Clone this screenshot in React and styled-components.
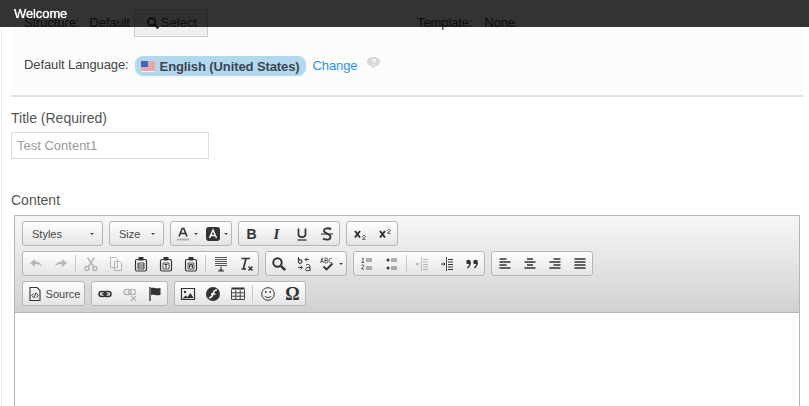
import React from 'react';
import styled, { createGlobalStyle } from 'styled-components';

const GlobalStyle = createGlobalStyle`
    html, body {
        margin: 0;
        padding: 0;
        background: #fff;
        font-family: "Liberation Sans", Arial, sans-serif;
        color: #444;
    }
`;

const Page = styled.div`
    height: 406px;
    overflow: hidden;
    margin-left: 1px;
    border-left: 1px solid #eee;
    padding-left: 9px;
    box-sizing: border-box;
`;

const TopBar = styled.div`
    position: fixed;
    top: 0;
    left: 0;
    right: 0;
    height: 27px;
    padding-left: 14px;
    background: rgba(0, 0, 0, 0.8);
    color: #fff;
    font-size: 13px;
    letter-spacing: -0.1px;
    line-height: 27px;
    text-shadow: 0 0 1px #fff;
`;

const InfoPanel = styled.div`
    width: 792px;
    height: 97px;
    box-sizing: border-box;
    background: #fcfcfc;
    border-bottom: 2px solid #e0e0e0;
    padding: 9px 0 0 13px;
    font-size: 13px;
    letter-spacing: -0.1px;
`;

const InfoRow = styled.div`
    display: flex;
    align-items: center;
    height: 27px;
    margin-bottom: 15px;
`;

const InfoCell = styled.div`
    display: flex;
    align-items: center;
    width: ${p => p.$width || 'auto'};
`;

const InfoLabel = styled.span`
    margin-right: ${p => p.$gap || 12}px;
`;

const SelectButton = styled.button`
    display: flex;
    align-items: center;
    gap: 1px;
    width: 74px;
    height: 28px;
    margin-left: 4px;
    padding: 0 0 0 11px;
    border: 1px solid #ccc;
    background: #efefef;
    color: #444;
    font: 13px "Liberation Sans", Arial, sans-serif;
`;

const LanguagePill = styled.span`
    display: flex;
    align-items: center;
    gap: 5px;
    height: 20px;
    padding: 0 6px;
    margin: 3px 0 0 -6px;
    border-radius: 8px;
    background: #b2d8f0;
    color: #3c4650;
    font-size: 13px;
    font-weight: bold;
    letter-spacing: -0.1px;
`;

const ChangeLink = styled.a`
    margin: 2px 8px 0 7px;
    color: #2a93e0;
    font-size: 13px;
`;

const FieldLabel = styled.div`
    font-size: 14px;
    line-height: 16px;
    color: #555;
    margin-bottom: ${p => p.$after}px;
    margin-top: ${p => p.$before}px;
`;

const TitleInput = styled.input`
    display: block;
    width: 198px;
    height: 27px;
    box-sizing: border-box;
    border: 1px solid #ddd;
    padding: 0 5px;
    font: 13px "Liberation Sans", Arial, sans-serif;
    color: #999;
    background: #fff;
`;

const Editor = styled.div`
    width: 786px;
    height: 200px;
    margin-left: 3px;
    box-sizing: border-box;
    border: 1px solid #b6b6b6;
    border-bottom: 0;
`;

const Toolbar = styled.div`
    height: 97px;
    box-sizing: border-box;
    padding: 5px 7px 0;
    background: linear-gradient(#f6f6f6, #d0d2d0);
    border-bottom: 1px solid #b6b6b6;
`;

const ToolRow = styled.div`
    display: flex;
    gap: 6px;
    height: 25px;
    margin-bottom: 5px;
`;

const Group = styled.div`
    display: flex;
    align-items: center;
    height: 25px;
    box-sizing: border-box;
    border: 1px solid #b6b6b6;
    border-radius: 3px;
    background: linear-gradient(#fff, #e4e4e4);
`;

const ToolButton = styled.span`
    display: flex;
    align-items: center;
    justify-content: center;
    gap: 3px;
    width: ${p => p.$width || 25}px;
    height: 23px;
    color: #333;
    svg {
        display: block;
        opacity: ${p => (p.$off ? 0.3 : 1)};
    }
`;

const Separator = styled.span`
    width: 1px;
    height: 17px;
    margin: 0 2px;
    background: #c8c8c8;
`;

const Combo = styled.span`
    display: flex;
    align-items: center;
    justify-content: space-between;
    width: ${p => p.$width}px;
    box-sizing: border-box;
    padding: 0 8px 0 ${p => p.$left}px;
    font-size: 11px;
    color: #484848;
`;

const Caret = styled.span`
    width: 0;
    height: 0;
    border-left: 2px solid transparent;
    border-right: 2px solid transparent;
    border-top: 2px solid #444;
`;

const SourceLabel = styled.span`
    font-size: 11px;
    color: #484848;
`;

const Glyph = styled.span`
    font: ${p => p.$font};
    color: #333;
    line-height: 16px;
`;

const Icon = ({ children, size = 16 }) => (
    <svg width={size} height={size} viewBox="0 0 16 16" fill="none" stroke="#333" strokeWidth="1">
        {children}
    </svg>
);

const Clipboard = ({ children }) => (
    <>
        <rect x="2.500" y="3.500" width="11" height="11.500" rx="1.500" strokeWidth="1.200" />
        <path d="M5.500 1h5v3.500h-5z" fill="#333" stroke="none" />
        {children}
    </>
);

const icons = {
    undo: <path d="M2 7l5-4v2.600c4 0 6 2 7 5-2-2-4-2.400-7-2.200V11z" fill="#333" stroke="none" />,
    redo: <path d="M14 7L9 3v2.600c-4 0-6 2-7 5 2-2 4-2.400 7-2.200V11z" fill="#333" stroke="none" />,
    cut: (
        <>
            <path d="M4.500 1.500l6 9M11.500 1.500l-6 9" strokeWidth="1.500" />
            <circle cx="4" cy="12.500" r="2" strokeWidth="1.400" />
            <circle cx="12" cy="12.500" r="2" strokeWidth="1.400" />
        </>
    ),
    copy: <path d="M2.500 1.500h5l2 2v8h-7zM6.500 5.500h5l2 2v7h-7z" fill="#fff" />,
    paste: <Clipboard><path d="M5 7h6v6H5zM5 9h6M5 11h6" strokeWidth="0.900" /></Clipboard>,
    pasteText: <Clipboard><path d="M5 7h6v6H5z" strokeWidth="0.800" /><path d="M6.500 8.500h3M8 8.500V12" strokeWidth="1" /></Clipboard>,
    pasteWord: <Clipboard><path d="M5 7h6v6H5z" strokeWidth="0.800" /><path d="M6.500 12V8.500h3V12M6.500 10h3" strokeWidth="0.900" /></Clipboard>,
    block: (
        <>
            <path d="M2 1.500h12M2 3.500h12M2 5.500h12M2 7.500h12M2 9.500h12" strokeWidth="1" stroke="#555" />
            <path d="M8 10.500v3.500M6.500 13L8 15l1.500-2M5 15h6" strokeWidth="1" />
        </>
    ),
    clear: (
        <>
            <path d="M3.500 2.500h8.500M8 2.500L5.500 12.500M3.500 13h4.500" strokeWidth="1.700" />
            <path d="M10.500 10.500l4 4M14.500 10.500l-4 4" strokeWidth="1.500" />
        </>
    ),
    search: (
        <>
            <circle cx="6.500" cy="6.500" r="4.200" strokeWidth="2" />
            <path d="M9.800 9.800l4.400 4.400" strokeWidth="2.600" />
        </>
    ),
    replace: (
        <>
            <path d="M2.500 1v6M2.500 4.500c1-1.500 3.500-1 3.500 1s-2.500 2.500-3.500 1" strokeWidth="1.100" />
            <path d="M9 3.500h4M11 1.500l-2 2 2 2M2 11.500h4M4.500 9.500l2 2-2 2" strokeWidth="0.900" />
            <path d="M10 9c2-1 4-.5 4 1.500V15M14 11.500c-3-.5-4.500 .5-4.500 2s3 1.800 4.500 0" strokeWidth="1" />
        </>
    ),
    spell: (
        <>
            <path d="M.5 7l1.500-5 1.500 5M1 5.500h2M5 2v5M5 2h1.300a1.200 1.200 0 010 2.500H5h1.500a1.200 1.200 0 010 2.500H5M12 2.500H10.500a1.500 1.500 0 00-1.500 1.500v1.200a1.500 1.500 0 001.500 1.500H12" strokeWidth="0.700" />
            <path d="M3.500 10.500l3 3 6-6" strokeWidth="1.800" />
        </>
    ),
    numbered: (
        <>
            <path d="M3 2.500l1-.5v4.500M2.500 6.500h2.500M2.500 9.500c.7-1 2.500-.8 2.400.3-.1 1-2.400 2-2.400 3.200h2.600" strokeWidth="0.800" />
            <path d="M7 3h6M7 5h6M7 11h6M7 13h6" strokeWidth="1.100" stroke="#666" />
        </>
    ),
    bullets: (
        <>
            <circle cx="4" cy="4" r="1.500" fill="#333" stroke="none" />
            <circle cx="4" cy="12" r="1.500" fill="#333" stroke="none" />
            <path d="M7 3h6M7 5h6M7 11h6M7 13h6" strokeWidth="1.100" stroke="#666" />
        </>
    ),
    outdent: (
        <>
            <path d="M7.500 1v14" strokeWidth="0.900" />
            <path d="M9 3.500h5M9 6h5M9 8.500h5M9 11h5M9 13.500h5" strokeWidth="1" />
            <path d="M2 8h4M4 6.500L2 8l2 1.500" strokeWidth="1" />
        </>
    ),
    indent: (
        <>
            <path d="M7.500 1v14" strokeWidth="0.900" />
            <path d="M9 3.500h5M9 6h5M9 8.500h5M9 11h5M9 13.500h5" strokeWidth="1" />
            <path d="M2 8h4M4.500 6.500L6 8l-1.500 1.500" strokeWidth="1" />
        </>
    ),
    quote: (
        <>
            <circle cx="4.500" cy="6" r="2.300" fill="#333" stroke="none" />
            <circle cx="11.500" cy="6" r="2.300" fill="#333" stroke="none" />
            <path d="M6.300 6.500c0 2.500-1 4-3 5.500M13.300 6.500c0 2.500-1 4-3 5.500" strokeWidth="1.300" />
        </>
    ),
    alignLeft: <path d="M2.500 3h7M2.500 6h11M2.500 9h7M2.500 12h11" strokeWidth="1.600" />,
    alignCenter: <path d="M5 3h6M2.500 6h11M5 9h6M2.500 12h11" strokeWidth="1.600" />,
    alignRight: <path d="M6.500 3h7M2.500 6h11M6.500 9h7M2.500 12h11" strokeWidth="1.600" />,
    justify: <path d="M2.500 3h11M2.500 6h11M2.500 9h11M2.500 12h11" strokeWidth="1.600" />,
    source: (
        <>
            <path d="M3 1.500h7l3 3v10H3z" strokeWidth="1.100" />
            <path d="M6.500 7.500L4.800 9.500l1.700 2M9.500 7.500l1.700 2-1.700 2M7 12l2-5.500" strokeWidth="1" />
        </>
    ),
    link: (
        <>
            <rect x="2" y="5.500" width="7" height="5" rx="2.500" strokeWidth="1.500" />
            <rect x="7" y="5.500" width="7" height="5" rx="2.500" strokeWidth="1.500" />
            <path d="M4.500 8h7" strokeWidth="1.300" />
        </>
    ),
    unlink: (
        <>
            <rect x="2" y="3.500" width="7" height="5" rx="2.500" strokeWidth="1.400" />
            <rect x="6.500" y="3.500" width="7" height="5" rx="2.500" strokeWidth="1.400" />
            <path d="M9 10l5 5M14 10l-5 5" strokeWidth="1.400" />
        </>
    ),
    anchor: (
        <>
            <path d="M3 1v14" strokeWidth="1.400" />
            <path d="M4 2c3-1 4 1 9.500 0v7C8 10 7 8 4 9z" fill="#333" stroke="none" />
        </>
    ),
    image: (
        <>
            <path d="M1.500 2.500h13v11h-13z" strokeWidth="1.200" />
            <circle cx="5" cy="6" r="1.200" fill="#333" stroke="none" />
            <path d="M2.500 12.500l3-3 2 1.500 3-4 3 5z" fill="#333" stroke="none" />
        </>
    ),
    flash: (
        <>
            <circle cx="8" cy="8" r="7" fill="#333" stroke="none" />
            <path d="M12 4c-3 0-3.500 1.500-4 4s-1 3.500-4 4M6 8h4.500" stroke="#fff" strokeWidth="1.400" />
        </>
    ),
    table: (
        <>
            <path d="M1.500 2.500h13" strokeWidth="2" />
            <path d="M1.500 3.500v10h13v-10M1.500 6.800h13M1.500 10.200h13M5.800 4v9.500M10.200 4v9.500" strokeWidth="0.900" />
        </>
    ),
    smiley: (
        <>
            <circle cx="8" cy="8" r="6.300" strokeWidth="1" />
            <circle cx="5.800" cy="6" r="0.900" fill="#333" stroke="none" />
            <circle cx="10.200" cy="6" r="0.900" fill="#333" stroke="none" />
            <path d="M4.800 10c1.400 2 5 2 6.400 0" strokeWidth="1" />
        </>
    ),
};

const FontColorIcon = () => (
    <Icon>
        <path d="M4 10.500L7.200 2.500h1.600L12 10.500M5.500 7.500h5" strokeWidth="1.600" />
        <path d="M2 13.500h12" stroke="#b0b0b0" strokeWidth="2" />
    </Icon>
);

const BackColorIcon = () => (
    <Icon>
        <rect x="1.500" y="1.500" width="13" height="13" rx="2" fill="#333" />
        <path d="M4.500 12L8 4l3.500 8M5.800 9.500h4.400" stroke="#fff" strokeWidth="1.400" />
    </Icon>
);

const SearchIcon = () => (
    <svg width="14" height="14" viewBox="0 0 16 16" fill="none" stroke="#333">
        {icons.search}
    </svg>
);

const FlagIcon = () => (
    <svg width="14" height="11" viewBox="0 0 14 11">
        <rect width="14" height="11" fill="#f0f0f0" />
        <path d="M0 1h14M0 3h14M0 5h14M0 7h14M0 9h14" stroke="#d8606a" strokeWidth="1" />
        <rect width="7" height="6" fill="#4a62b8" />
    </svg>
);

const HelpBubble = styled(({ className }) => (
    <svg className={className} width="15" height="12" viewBox="0 0 15 13">
        <path d="M7.500 0C3 0 .5 2 .5 5s2.500 4.500 5 5l2 3 1.500-3c3-.4 5.500-2 5.500-5s-3-5-7-5z" fill="#d6d6d6" />
        <path d="M5.800 3.500c.5-1.300 3.500-1.300 3.500.4 0 1.200-1.800 1.200-1.800 2.600M7.500 7.500v1.500" stroke="#fff" strokeWidth="1.300" fill="none" />
    </svg>
))`
    margin-top: -4px;
`;

const row1Text = [
    { key: 'bold', font: 'bold 14px "Liberation Sans", Arial, sans-serif', text: 'B' },
    { key: 'italic', font: 'italic bold 15px "Liberation Serif", serif', text: 'I' },
];

const IconButton = ({ name, off }) => (
    <ToolButton $off={off}>
        <Icon>{icons[name]}</Icon>
    </ToolButton>
);

const Script = ({ up }) => (
    <ToolButton>
        <Icon>
            <path d="M3 5l5 6.500M8 5l-5 6.500" strokeWidth="2" />
            <path d={up ? 'M10.500 5c0-2 3-2 3-.4 0 .9-3 1.700-3 2.700h3' : 'M10.500 11c0-2 3-2 3-.4 0 .9-3 1.700-3 2.700h3'} strokeWidth="0.800" />
        </Icon>
    </ToolButton>
);

const App = () => (
    <>
        <GlobalStyle />
        <TopBar>Welcome</TopBar>
        <Page>
            <InfoPanel>
                <InfoRow>
                    <InfoCell $width="393px">
                        <InfoLabel $gap={10}>Structure:</InfoLabel>
                        <span>Default</span>
                        <SelectButton>
                            <SearchIcon />
                            Select
                        </SelectButton>
                    </InfoCell>
                    <InfoCell>
                        <InfoLabel>Template:</InfoLabel>
                        <span>None</span>
                    </InfoCell>
                </InfoRow>
                <InfoRow>
                    <InfoLabel>Default Language:</InfoLabel>
                    <LanguagePill>
                        <FlagIcon />
                        English (United States)
                    </LanguagePill>
                    <ChangeLink>Change</ChangeLink>
                    <HelpBubble />
                </InfoRow>
            </InfoPanel>
            <FieldLabel $before={13} $after={6}>Title (Required)</FieldLabel>
            <TitleInput readOnly value="Test Content1" />
            <FieldLabel $before={33} $after={7}>Content</FieldLabel>
            <Editor>
                <Toolbar>
                    <ToolRow>
                        <Group>
                            <Combo $width={79} $left={9}>Styles<Caret /></Combo>
                        </Group>
                        <Group>
                            <Combo $width={53} $left={9}>Size<Caret /></Combo>
                        </Group>
                        <Group>
                            <ToolButton $width={30}><FontColorIcon /><Caret /></ToolButton>
                            <ToolButton $width={30}><BackColorIcon /><Caret /></ToolButton>
                        </Group>
                        <Group>
                            {row1Text.map(item => (
                                <ToolButton key={item.key}>
                                    <Glyph $font={item.font}>{item.text}</Glyph>
                                </ToolButton>
                            ))}
                            <ToolButton>
                                <Icon>
                                    <path d="M4.500 2.500v6c0 3.500 7 3.500 7 0v-6" strokeWidth="1.700" />
                                    <path d="M3.500 14h9" strokeWidth="1.300" />
                                </Icon>
                            </ToolButton>
                            <ToolButton>
                                <Icon>
                                    <path d="M12 3.500C10 1.500 4.500 2 5 5s6.500 2.500 6.500 6S6 14 4 12.500" strokeWidth="1.800" />
                                    <path d="M2 8h12" strokeWidth="1.100" />
                                </Icon>
                            </ToolButton>
                        </Group>
                        <Group>
                            <Script />
                            <Script up />
                        </Group>
                    </ToolRow>
                    <ToolRow>
                        <Group>
                            <IconButton name="undo" off />
                            <IconButton name="redo" off />
                            <Separator />
                            <IconButton name="cut" off />
                            <IconButton name="copy" off />
                            <IconButton name="paste" />
                            <IconButton name="pasteText" />
                            <IconButton name="pasteWord" />
                            <Separator />
                            <IconButton name="block" />
                            <IconButton name="clear" />
                        </Group>
                        <Group>
                            <IconButton name="search" />
                            <IconButton name="replace" />
                            <ToolButton $width={30}><Icon>{icons.spell}</Icon><Caret /></ToolButton>
                        </Group>
                        <Group>
                            <IconButton name="numbered" />
                            <IconButton name="bullets" />
                            <Separator />
                            <IconButton name="outdent" off />
                            <IconButton name="indent" />
                            <IconButton name="quote" />
                        </Group>
                        <Group>
                            <IconButton name="alignLeft" />
                            <IconButton name="alignCenter" />
                            <IconButton name="alignRight" />
                            <IconButton name="justify" />
                        </Group>
                    </ToolRow>
                    <ToolRow>
                        <Group>
                            <ToolButton $width={61}>
                                <Icon>{icons.source}</Icon>
                                <SourceLabel>Source</SourceLabel>
                            </ToolButton>
                        </Group>
                        <Group>
                            <IconButton name="link" />
                            <IconButton name="unlink" off />
                            <IconButton name="anchor" />
                        </Group>
                        <Group>
                            <IconButton name="image" />
                            <IconButton name="flash" />
                            <IconButton name="table" />
                            <Separator />
                            <IconButton name="smiley" />
                            <ToolButton>
                                <Glyph $font='bold 18px "Liberation Serif", serif'>Ω</Glyph>
                            </ToolButton>
                        </Group>
                    </ToolRow>
                </Toolbar>
            </Editor>
        </Page>
    </>
);

export default App;
